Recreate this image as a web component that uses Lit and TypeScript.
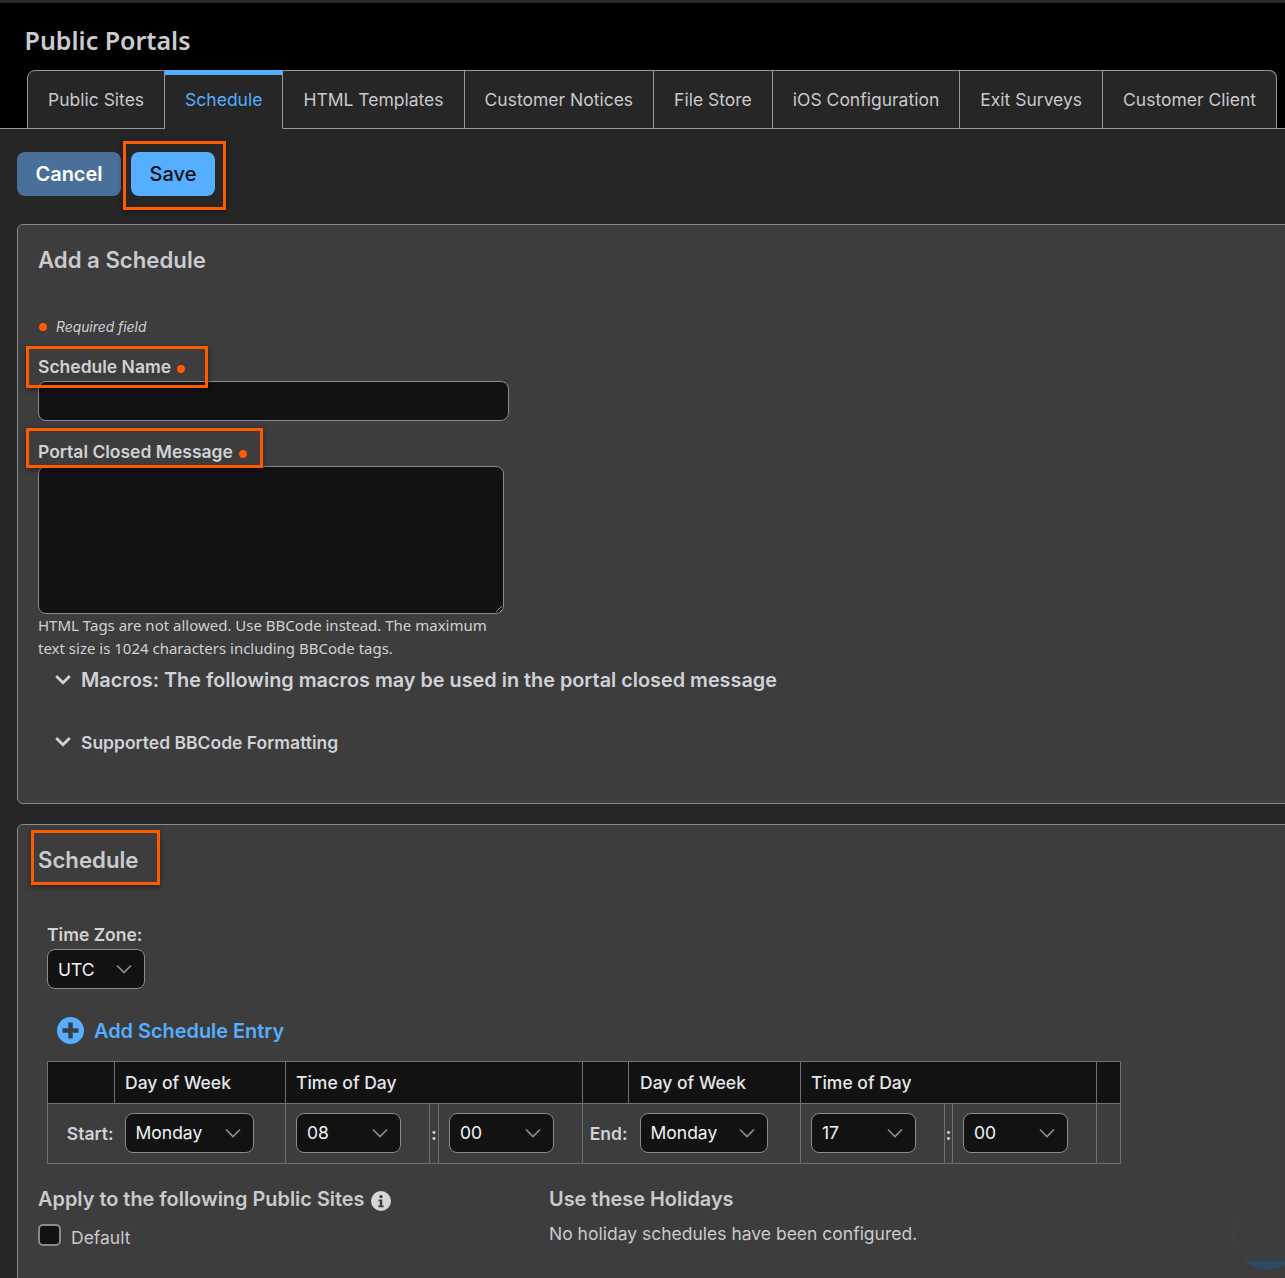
import { LitElement, html, css, svg } from "lit";
import { customElement } from "lit/decorators.js";

const chevron = svg`<svg class="chev" width="16" height="10" viewBox="0 0 16 10" fill="none"><path d="M1 1.5 L8 8.5 L15 1.5" stroke="#8d9094" stroke-width="1.6"/></svg>`;
const disc = svg`<svg class="disc" width="16" height="12" viewBox="0 0 16 12" fill="none"><path d="M1.2 2 L8 8.8 L14.8 2" stroke="#cfd2d4" stroke-width="2.8"/></svg>`;

@customElement("app-root")
export class AppRoot extends LitElement {
  static styles = css`
    :host { display: block; width: 1285px; height: 1278px; overflow: hidden; position: relative; background: #262626; color: #d0d2d4; font-family: Inter, "Liberation Sans", sans-serif; font-size: 17.5px; }
    * { box-sizing: border-box; }
    .strip { height: 3px; background: #2b2b2b; }
    .top { height: 126px; background: #000; display: flex; flex-direction: column; }
    .title { font: 600 25px/34px "Noto Sans", sans-serif; color: #c9cbcd; margin: 20px 0 0 24.5px; height: 47px; flex: none; }
    .tabs { display: flex; margin-left: 27px; width: 1250px; height: 59px; position: relative; }
    .rule { position: absolute; left: 0; right: 0; top: 128px; height: 1px; background: #999; }
    .tab { height: 59px; background: #262626; border: 1px solid #999; border-left: 0; padding: 0 20px; display: flex; align-items: center; color: #c8cacc; font-size: 17.5px; white-space: nowrap; position: relative; z-index: 1; }
    .tab:first-child { border-left: 1px solid #999; border-top-left-radius: 8px; }
    .tab:last-child { border-top-right-radius: 8px; flex: 1; }
    .tab.on { color: #55aeff; border-bottom-color: #262626; border-top: 5px solid #55aeff; padding-bottom: 4px; }
    .actions { display: flex; gap: 10px; padding: 23px 0 0 17px; height: 95px; }
    .btn { height: 44px; border-radius: 8px; display: flex; align-items: center; justify-content: center; font-size: 20px; }
    .cancel { width: 104px; background: #4a6f99; color: #fff; font-weight: 600; }
    .save { width: 84px; background: #55aeff; color: #111; font-weight: 500; position: relative; }
    .hl { position: absolute; border: 3px solid #ff5a00; box-shadow: 0 2px 6px rgba(0,0,0,.45); pointer-events: none; }
    .save .hl { left: -8px; top: -11px; width: 103px; height: 69px; }
    .panel { margin: 0 -30px 0 17px; background: #3d3d3d; border: 1px solid #8a8a8a; border-radius: 6px 0 0 6px; }
    .p1 { height: 580px; padding: 0 20px; margin-top: 0; }
    .p2 { height: 500px; margin-top: 20px; padding: 0 20px; }
    h2 { margin: 0; font-weight: 600; color: #c9cbcd; }
    .p1 h2 { font-size: 22.2px; line-height: 28px; padding-top: 21px; height: 49px; }
    .req { margin-top: 43px; height: 20px; display: flex; align-items: center; font-size: 13.85px; font-style: italic; color: #ccd0d4; }
    .dot { width: 8px; height: 8px; border-radius: 50%; background: #ff5a00; display: inline-block; }
    .req .dot { margin-right: 9px; margin-left: 1px; }
    .lab { position: relative; width: max-content; font-weight: 600; font-size: 17.5px; line-height: 22px; color: #cfd2d6; display: flex; align-items: center; padding-bottom: 2px; }
    .lab .dot { margin-left: 6px; margin-top: 3px; }
    .l1 { margin-top: 18px; height: 26px; }
    .l1 .hl { left: -12px; top: -9px; width: 182px; height: 42px; }
    input, textarea { display: block; background: #121212; border: 1px solid #8a8a8a; border-radius: 8px; outline: none; margin: 0; padding: 0; color: #fff; }
    input { width: 471px; height: 40px; }
    .l2 { margin-top: 19px; height: 26px; }
    .l2 .hl { left: -12px; top: -12px; width: 237px; height: 40px; }
    textarea { width: 466px; height: 148px; resize: both; }
    .help { width: 466px; font: 400 15px/23px "Noto Sans", sans-serif; color: #cfd2d4; margin-top: 0; }
    .disc-row { display: flex; align-items: center; font-weight: 600; color: #cfd2d6; margin-left: 17px; }
    .disc { margin-right: 10px; flex: none; }
    .m1 { font-size: 19.83px; height: 24px; margin-top: 8px; }
    .m2 { font-size: 17.5px; height: 24px; margin-top: 38px; }
    .p2 h2 { position: relative; width: max-content; font-size: 22.2px; line-height: 30px; padding-top: 20px; height: 50px; }
    .p2 h2 .hl { left: -7px; top: 5px; width: 129px; height: 55px; }
    .tz { margin: 49px 0 0 9px; font-weight: 600; font-size: 17.5px; line-height: 22px; height: 25px; }
    .sel { background: #121212; border: 1px solid #8a8a8a; border-radius: 8px; height: 40px; display: flex; align-items: center; justify-content: space-between; padding: 0 12px 0 10px; color: #f2f4f6; font-size: 17.5px; }
    .chev { flex: none; }
    .tzsel { width: 98px; margin-left: 9px; }
    .add { display: flex; align-items: center; margin: 28px 0 0 19px; height: 27px; color: #55aeff; font-weight: 600; font-size: 19.9px; gap: 10px; }
    table { border-collapse: collapse; table-layout: fixed; width: 1073px; margin: 17px 0 0 9px; }
    th { background: #121212; height: 42px; text-align: left; font-weight: 500; color: #e4e6e8; font-size: 17.5px; padding: 0 0 0 10px; border: 1px solid #707070; border-bottom: 0; }
    th:nth-child(5) { padding-left: 11px; }
    td { height: 60px; border: 1px solid #707070; padding: 0 0 2px 10px; }
    td.lb { text-align: right; font-weight: 600; padding: 0 1px 0 0; border-right: 0; font-size: 17.5px; color: #cfd2d6; }
    td.ns { border-left: 0; padding-left: 0; }
    td.sep { padding: 0; text-align: center; font-weight: 700; font-size: 17.5px; color: #cfd2d6; }
    .s-day { width: 129px; margin-left: 10px; }
    .s-day2 { width: 128px; margin-left: 11px; }
    .s-num { width: 105px; }
    .bottom { display: flex; margin: 23px 0 0 0; }
    .col1 { width: 511px; }
    .sub { font-size: 19.9px; font-weight: 600; line-height: 24px; color: #c9cbcd; display: flex; align-items: center; gap: 6px; }
    .info { flex: none; margin-top: 3px; }
    .chk { display: flex; align-items: center; margin-top: 13px; color: #c8cacc; font-size: 17.5px; }
    .box { width: 23px; height: 22px; background: #121212; border: 2px solid #8a8a8a; border-radius: 5px; margin-right: 10px; margin-bottom: 4px; }
    .none { margin-top: 11px; font-size: 17.5px; line-height: 24px; color: #c8cacc; }
    .blob { position: absolute; left: 1232px; top: 1209px; width: 72px; height: 60px; border-radius: 50%; background: #2c4a63; clip-path: inset(52px 0 0 0); }
    .sliver { position: absolute; left: 1233px; top: 1222px; width: 2px; height: 26px; background: linear-gradient(transparent, #2c4a63, transparent); opacity: .7; }
  `;

  private sel(v: string, cls: string) {
    return html`<div class="sel ${cls}"><span>${v}</span>${chevron}</div>`;
  }

  render() {
    const tabs = ["Public Sites", "Schedule", "HTML Templates", "Customer Notices", "File Store", "iOS Configuration", "Exit Surveys", "Customer Client"];
    return html`
      <div class="strip"></div>
      <div class="top">
        <div class="title">Public Portals</div>
        <div class="tabs">
          ${tabs.map((t) => html`<div class="tab ${t === "Schedule" ? "on" : ""}">${t}</div>`)}
        </div>
      </div>
      <div class="rule"></div>
      <div class="actions">
        <div class="btn cancel">Cancel</div>
        <div class="btn save">Save<span class="hl"></span></div>
      </div>
      <section class="panel p1">
        <h2>Add a Schedule</h2>
        <div class="req"><span class="dot"></span>Required field</div>
        <div class="lab l1">Schedule Name<span class="dot"></span><span class="hl"></span></div>
        <input type="text" />
        <div class="lab l2">Portal Closed Message<span class="dot"></span><span class="hl"></span></div>
        <textarea></textarea>
        <div class="help">HTML Tags are not allowed. Use BBCode instead. The maximum text size is 1024 characters including BBCode tags.</div>
        <div class="disc-row m1">${disc}Macros: The following macros may be used in the portal closed message</div>
        <div class="disc-row m2">${disc}Supported BBCode Formatting</div>
      </section>
      <section class="panel p2">
        <h2>Schedule<span class="hl"></span></h2>
        <div class="tz">Time Zone:</div>
        ${this.sel("UTC", "tzsel")}
        <div class="add">
          <svg width="27" height="27" viewBox="0 0 27 27"><circle cx="13.5" cy="13.5" r="13.5" fill="#55aeff"/><path d="M13.5 5.5v16M5.5 13.5h16" stroke="#3a3f44" stroke-width="4.5"/></svg>
          Add Schedule Entry
        </div>
        <table>
          <colgroup>
            ${[67, 171, 144, 9, 144, 46, 172, 144, 8, 144, 24].map((w) => html`<col style="width:${w}px" />`)}
          </colgroup>
          <tr>
            <th></th><th>Day of Week</th><th colspan="3">Time of Day</th>
            <th></th><th>Day of Week</th><th colspan="3">Time of Day</th><th></th>
          </tr>
          <tr>
            <td class="lb">Start:</td><td class="ns">${this.sel("Monday", "s-day")}</td>
            <td>${this.sel("08", "s-num")}</td><td class="sep">:</td><td>${this.sel("00", "s-num")}</td>
            <td class="lb">End:</td><td class="ns">${this.sel("Monday", "s-day2")}</td>
            <td>${this.sel("17", "s-num")}</td><td class="sep">:</td><td>${this.sel("00", "s-num")}</td>
            <td></td>
          </tr>
        </table>
        <div class="bottom">
          <div class="col1">
            <div class="sub">Apply to the following Public Sites
              <svg class="info" width="20" height="20" viewBox="0 0 20 20"><circle cx="10" cy="10" r="10" fill="#d4d6d8"/><circle cx="10" cy="5.6" r="1.7" fill="#3d3d3d"/><path d="M7.6 8.6h3.6v6h1.4v1.6H7.4v-1.6h1.4v-4.4H7.6z" fill="#3d3d3d"/></svg>
            </div>
            <div class="chk"><span class="box"></span>Default</div>
          </div>
          <div>
            <div class="sub">Use these Holidays</div>
            <div class="none">No holiday schedules have been configured.</div>
          </div>
        </div>
      </section>
      <div class="blob"></div>
      <div class="sliver"></div>
    `;
  }
}
